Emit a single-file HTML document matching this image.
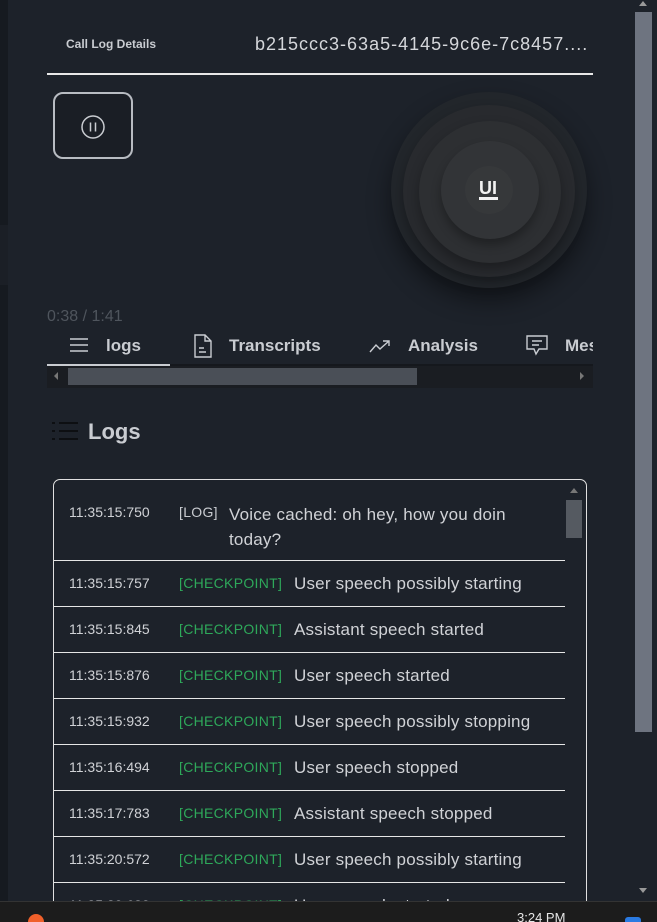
<!DOCTYPE html>
<html><head><meta charset="utf-8"><style>
*{margin:0;padding:0;box-sizing:border-box}
html,body{width:657px;height:922px;overflow:hidden}
body{background:#1d222a;font-family:"Liberation Sans",sans-serif;color:#d5d7db;position:relative}
.abs{position:absolute}
.row{position:absolute;left:0;width:511px;height:46px;border-bottom:1px solid #e6e6e6}
.row .t{position:absolute;left:15px;top:14px;font-size:14px;color:#d0d2d6}
.row .c{position:absolute;left:125px;top:14px;font-size:14px;color:#2ea85a;letter-spacing:0.3px}
.row .m{position:absolute;left:240px;top:13px;font-size:17px;color:#d0d2d6;letter-spacing:0.2px}
</style></head><body>
<div class="abs" style="left:0;top:0;width:8px;height:901px;background:#161a20"></div>
<div class="abs" style="left:0;top:225px;width:8px;height:60px;background:#1b1f26"></div>
<div class="abs" style="left:66px;top:37px;font-size:12px;font-weight:bold;color:#c9ccd1">Call Log Details</div>
<div class="abs" style="left:255px;top:34px;font-size:18px;color:#d5d7db;letter-spacing:1px;white-space:nowrap">b215ccc3-63a5-4145-9c6e-7c8457....</div>
<div class="abs" style="left:47px;top:73px;width:546px;height:2px;background:#e8e8e8"></div>
<div class="abs" style="left:53px;top:92px;width:80px;height:67px;border:2px solid #b8bcc2;border-radius:10px;background:#1a1e25"></div>
<svg class="abs" style="left:80px;top:114px" width="26" height="26"><circle cx="13" cy="13" r="11" fill="none" stroke="#c9ccd1" stroke-width="1.5"/><line x1="10.5" y1="8.5" x2="10.5" y2="17.5" stroke="#c9ccd1" stroke-width="1.5"/><line x1="15.5" y1="8.5" x2="15.5" y2="17.5" stroke="#c9ccd1" stroke-width="1.5"/></svg>
<div class="abs" style="left:391px;top:92px;width:196px;height:196px;border-radius:50%;background:#22262b;box-shadow:0 12px 24px rgba(0,0,0,.45)"></div>
<div class="abs" style="left:403px;top:105px;width:172px;height:172px;border-radius:50%;background:#282a2e;box-shadow:0 6px 12px rgba(0,0,0,.3)"></div>
<div class="abs" style="left:419px;top:121px;width:142px;height:142px;border-radius:50%;background:#2d2f32;box-shadow:0 6px 12px rgba(0,0,0,.3)"></div>
<div class="abs" style="left:441px;top:141px;width:98px;height:98px;border-radius:50%;background:#323437;box-shadow:0 6px 10px rgba(0,0,0,.3)"></div>
<div class="abs" style="left:465px;top:166px;width:48px;height:48px;border-radius:50%;background:#36383a"></div>
<div class="abs" style="left:479px;top:178px;font-size:18px;font-weight:bold;color:#f2f2f2;line-height:20px">UI</div>
<div class="abs" style="left:479px;top:197px;width:19px;height:3px;background:#f2f2f2"></div>
<div class="abs" style="left:47px;top:308px;font-size:16px;color:#4f555d">0:38 / 1:41</div>
<svg class="abs" style="left:69px;top:337px" width="20" height="16"><path d="M1 2H19M1 8H19M1 14H19" stroke="#c9ccd1" stroke-width="1.6"/></svg>
<div class="abs" style="left:106px;top:336px;font-size:17px;font-weight:bold;color:#c9ccd1">logs</div>
<svg class="abs" style="left:193px;top:334px" width="20" height="24"><path d="M2 1H12L18 7V23H2Z M12 1V7H18 M6 14H11 M6 18H13" fill="none" stroke="#c9ccd1" stroke-width="1.4"/></svg>
<div class="abs" style="left:229px;top:336px;font-size:17px;font-weight:bold;color:#c9ccd1">Transcripts</div>
<svg class="abs" style="left:369px;top:338px" width="22" height="16"><path d="M1 14L7 7L11 11L20 3M14 3H20V8" fill="none" stroke="#c9ccd1" stroke-width="1.4"/></svg>
<div class="abs" style="left:408px;top:336px;font-size:17px;font-weight:bold;color:#c9ccd1">Analysis</div>
<svg class="abs" style="left:525px;top:334px" width="24" height="24"><path d="M2 2H22V15H14L11 20L9 15H2Z M7 7H17 M7 11H14" fill="none" stroke="#c9ccd1" stroke-width="1.4"/></svg>
<div class="abs" style="left:565px;top:336px;width:28px;overflow:hidden;font-size:17px;font-weight:bold;color:#c9ccd1;white-space:nowrap">Messages</div>
<div class="abs" style="left:47px;top:364px;width:546px;height:2px;background:#15181d"></div>
<div class="abs" style="left:47px;top:364px;width:123px;height:2px;background:#c9ccd1"></div>
<div class="abs" style="left:47px;top:366px;width:546px;height:22px;background:#1a1d22"></div>
<div class="abs" style="left:68px;top:368px;width:349px;height:17px;background:#4a4f57"></div>
<div class="abs" style="left:54px;top:372px;width:0;height:0;border-top:4px solid transparent;border-bottom:4px solid transparent;border-right:4px solid #777"></div>
<div class="abs" style="left:580px;top:372px;width:0;height:0;border-top:4px solid transparent;border-bottom:4px solid transparent;border-left:4px solid #777"></div>
<svg class="abs" style="left:52px;top:421px" width="26" height="20"><path d="M0 2H3M0 10H3M0 18H3M7 2H26M7 10H26M7 18H26" stroke="#0d0f12" stroke-width="2"/></svg>
<div class="abs" style="left:88px;top:419px;font-size:22px;font-weight:bold;color:#c9ccd1">Logs</div>
<div class="abs" style="left:53px;top:479px;width:534px;height:440px;border:1.5px solid #e0e0e0;border-radius:7px;overflow:hidden">
 <div class="row" style="top:0;height:81px"><span class="t" style="top:24px">11:35:15:750</span><span class="c" style="color:#c9ccd1;top:24px">[LOG]</span><span class="m" style="left:175px;top:22px;width:300px;line-height:25px">Voice cached: oh hey, how you doin today?</span></div>
 <div class="row" style="top:81px"><span class="t">11:35:15:757</span><span class="c">[CHECKPOINT]</span><span class="m">User speech possibly starting</span></div>
 <div class="row" style="top:127px"><span class="t">11:35:15:845</span><span class="c">[CHECKPOINT]</span><span class="m">Assistant speech started</span></div>
 <div class="row" style="top:173px"><span class="t">11:35:15:876</span><span class="c">[CHECKPOINT]</span><span class="m">User speech started</span></div>
 <div class="row" style="top:219px"><span class="t">11:35:15:932</span><span class="c">[CHECKPOINT]</span><span class="m">User speech possibly stopping</span></div>
 <div class="row" style="top:265px"><span class="t">11:35:16:494</span><span class="c">[CHECKPOINT]</span><span class="m">User speech stopped</span></div>
 <div class="row" style="top:311px"><span class="t">11:35:17:783</span><span class="c">[CHECKPOINT]</span><span class="m">Assistant speech stopped</span></div>
 <div class="row" style="top:357px"><span class="t">11:35:20:572</span><span class="c">[CHECKPOINT]</span><span class="m">User speech possibly starting</span></div>
 <div class="row" style="top:403px;border:none"><span class="t">11:35:20:680</span><span class="c">[CHECKPOINT]</span><span class="m">User speech started</span></div>
 <div class="abs" style="left:512px;top:20px;width:16px;height:38px;background:#555a61"></div>
 <div class="abs" style="left:516px;top:8px;width:0;height:0;border-left:4px solid transparent;border-right:4px solid transparent;border-bottom:5px solid #777"></div>
</div>
<div class="abs" style="left:635px;top:12px;width:17px;height:720px;background:#6e7480"></div>
<div class="abs" style="left:639px;top:1px;width:0;height:0;border-left:4px solid transparent;border-right:4px solid transparent;border-bottom:5px solid #999"></div>
<div class="abs" style="left:639px;top:888px;width:0;height:0;border-left:4px solid transparent;border-right:4px solid transparent;border-top:5px solid #999"></div>
<div class="abs" style="left:0;top:901px;width:657px;height:21px;background:#1c1c1c;border-top:1px solid #333;overflow:hidden">
 <div class="abs" style="left:28px;top:12px;width:16px;height:16px;border-radius:50%;background:#f0602a"></div>
 <div class="abs" style="left:517px;top:8px;font-size:13px;color:#e6e6e6">3:24 PM</div>
 <div class="abs" style="left:625px;top:15px;width:16px;height:10px;border-radius:3px;background:#2a7ae2"></div>
</div>
</body></html>
